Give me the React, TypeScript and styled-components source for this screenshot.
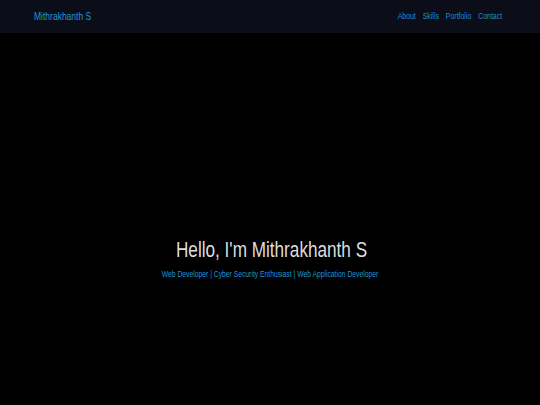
import React from "react";
import styled, { createGlobalStyle } from "styled-components";

const GlobalStyle = createGlobalStyle`
  html, body {
    margin: 0;
    padding: 0;
    background: #000000;
    font-family: "Liberation Sans", Arial, sans-serif;
  }
  * { box-sizing: border-box; }
`;

const Header = styled.header`
  height: 33px;
  background: #0b0d18;
  display: flex;
  align-items: center;
  justify-content: space-between;
  padding: 0 37.5px 0 34px;
`;

const Logo = styled.div`
  color: #1e9ad6;
  font-size: 10.5px;
  line-height: 1;
  transform: scaleX(0.81);
  transform-origin: left center;
`;

const Nav = styled.nav`
  display: flex;
  align-items: center;
  transform: scaleX(0.77);
  transform-origin: right center;
`;

const NavLink = styled.a`
  color: #1e8fca;
  font-size: 9px;
  text-decoration: none;
  margin: 0 4.5px;
  line-height: 1;
  &:last-child { margin-right: 0; }
`;

const Hero = styled.section`
  height: 372px;
  display: flex;
  flex-direction: column;
  align-items: center;
  justify-content: center;
  padding-top: 77px;
  text-align: center;
`;

const Title = styled.h1`
  margin: 0 0 7px 4px;
  color: #dddddd;
  font-weight: 400;
  font-size: 22px;
  white-space: nowrap;
  transform: scaleX(0.78);
`;

const Subtitle = styled.p`
  margin: 0;
  color: #1d96d2;
  font-size: 8.25px;
  white-space: nowrap;
  transform: scaleX(0.82);
`;

export default function App() {
  return (
    <>
      <GlobalStyle />
      <Header>
        <Logo>Mithrakhanth S</Logo>
        <Nav>
          <NavLink href="#about">About</NavLink>
          <NavLink href="#skills">Skills</NavLink>
          <NavLink href="#portfolio">Portfolio</NavLink>
          <NavLink href="#contact">Contact</NavLink>
        </Nav>
      </Header>
      <Hero>
        <Title>Hello, I'm Mithrakhanth S</Title>
        <Subtitle>
          Web Developer | Cyber Security Enthusiast | Web Application Developer
        </Subtitle>
      </Hero>
    </>
  );
}
